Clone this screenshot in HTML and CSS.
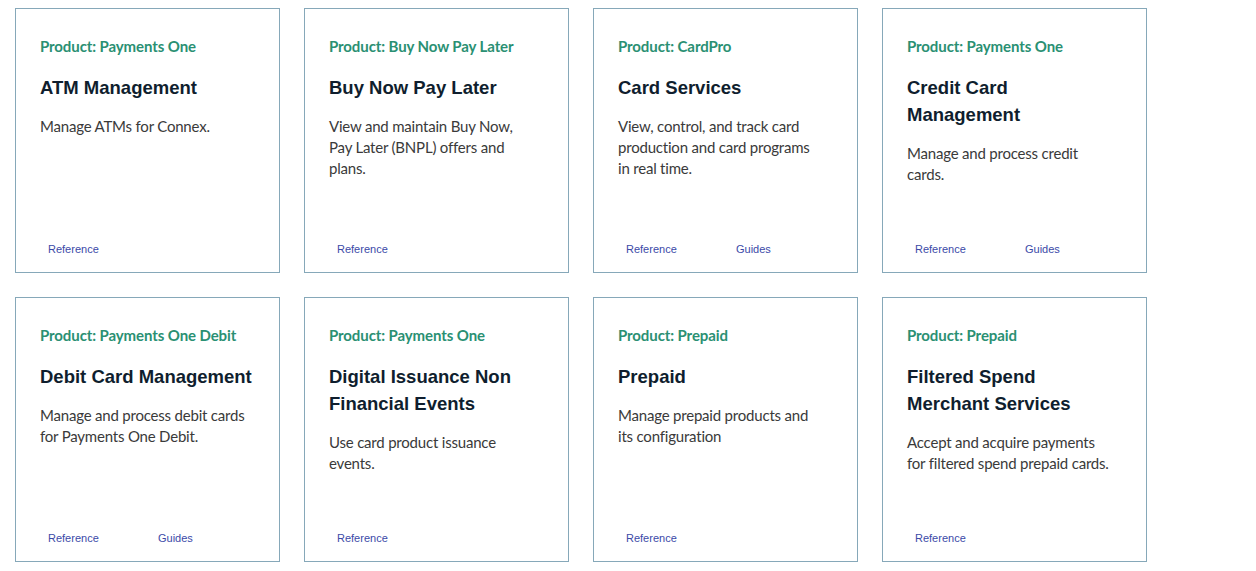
FILE: index.html
```html
<!DOCTYPE html>
<html lang="en">
<head>
<meta charset="utf-8">
<title>Products</title>
<link rel="stylesheet" href="styles.css">
</head>
<body>
<div class="grid">
  <div class="card">
    <div class="label">Product: Payments One</div>
    <div class="title">ATM Management</div>
    <div class="desc">Manage ATMs for Connex.</div>
    <div class="links"><a class="link" href="#">Reference</a></div>
  </div>
  <div class="card">
    <div class="label">Product: Buy Now Pay Later</div>
    <div class="title">Buy Now Pay Later</div>
    <div class="desc">View and maintain Buy Now, Pay Later (BNPL) offers and plans.</div>
    <div class="links"><a class="link" href="#">Reference</a></div>
  </div>
  <div class="card">
    <div class="label">Product: CardPro</div>
    <div class="title">Card Services</div>
    <div class="desc">View, control, and track card production and card programs in real time.</div>
    <div class="links"><a class="link" href="#">Reference</a><a class="link" href="#">Guides</a></div>
  </div>
  <div class="card">
    <div class="label">Product: Payments One</div>
    <div class="title">Credit Card Management</div>
    <div class="desc">Manage and process credit cards.</div>
    <div class="links"><a class="link" href="#">Reference</a><a class="link" href="#">Guides</a></div>
  </div>
  <div class="card">
    <div class="label">Product: Payments One Debit</div>
    <div class="title">Debit Card Management</div>
    <div class="desc">Manage and process debit cards for Payments One Debit.</div>
    <div class="links"><a class="link" href="#">Reference</a><a class="link" href="#">Guides</a></div>
  </div>
  <div class="card">
    <div class="label">Product: Payments One</div>
    <div class="title">Digital Issuance Non Financial Events</div>
    <div class="desc">Use card product issuance events.</div>
    <div class="links"><a class="link" href="#">Reference</a></div>
  </div>
  <div class="card">
    <div class="label">Product: Prepaid</div>
    <div class="title">Prepaid</div>
    <div class="desc">Manage prepaid products and its configuration</div>
    <div class="links"><a class="link" href="#">Reference</a></div>
  </div>
  <div class="card">
    <div class="label">Product: Prepaid</div>
    <div class="title">Filtered Spend Merchant Services</div>
    <div class="desc">Accept and acquire payments for filtered spend prepaid cards.</div>
    <div class="links"><a class="link" href="#">Reference</a></div>
  </div>
</div>
</body>
</html>
```
FILE: styles.css
```css
html, body {
  margin: 0;
  padding: 0;
  background: #ffffff;
}
body {
  padding: 8px 0 0 15px;
  font-family: Lato, "Liberation Sans", sans-serif;
}
.grid {
  display: grid;
  grid-template-columns: repeat(4, 265px);
  grid-auto-rows: 265px;
  gap: 24px;
}
.card {
  box-sizing: border-box;
  border: 1px solid #86a8b9;
  padding: 27px 24px 15px 24px;
  display: flex;
  flex-direction: column;
}
.label {
  color: #2a9073;
  font-size: 15px;
  font-weight: 700;
  letter-spacing: -0.1px;
  line-height: 20px;
}
.title {
  max-width: 214px;
  color: #0f1e2e;
  font-family: "Liberation Sans", Arial, sans-serif;
  font-size: 18.5px;
  font-weight: 700;
  line-height: 27px;
  margin-top: 18px;
}
.desc {
  max-width: 206px;
  color: #3a3a3a;
  font-size: 15px;
  letter-spacing: -0.2px;
  line-height: 21px;
  margin-top: 15px;
}
.links {
  margin-top: auto;
  display: flex;
}
.link {
  flex: 0 0 110px;
  box-sizing: border-box;
  padding-left: 8px;
  font-family: "Liberation Sans", Arial, sans-serif;
  font-size: 11px;
  line-height: 16px;
  color: #3b4aa8;
  text-decoration: none;
}
```
